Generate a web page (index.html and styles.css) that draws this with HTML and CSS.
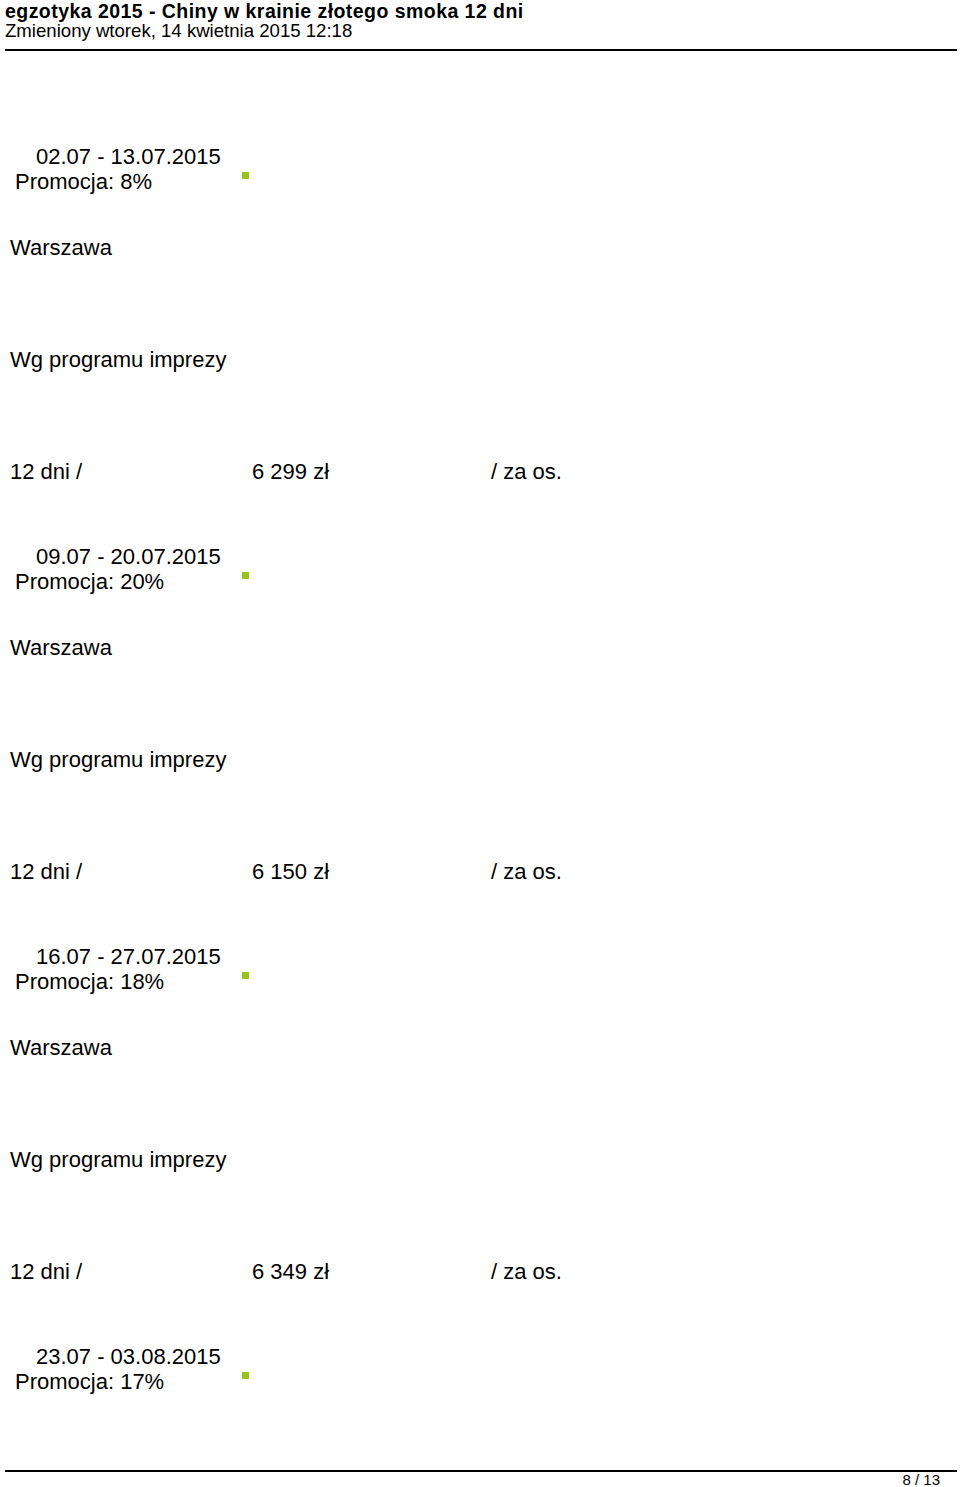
FILE: index.html
```html
<!DOCTYPE html>
<html lang="pl">
<head>
<meta charset="utf-8">
<title>egzotyka 2015 - Chiny w krainie złotego smoka 12 dni</title>
<link rel="stylesheet" href="styles.css">
</head>
<body>
<div class="page">
  <header class="head">
    <div class="title">egzotyka 2015 - Chiny w krainie złotego smoka 12 dni</div>
    <div class="subtitle">Zmieniony wtorek, 14 kwietnia 2015 12:18</div>
    <div class="rule"></div>
  </header>

  <main class="content">
    <section class="term">
      <div class="term-top">
        <div class="term-dates">
          <div class="date">02.07 - 13.07.2015</div>
          <div class="promo">Promocja: 8%</div>
        </div>
        <span class="mark"></span>
      </div>
      <div class="city">Warszawa</div>
      <div class="program">Wg programu imprezy</div>
      <div class="price-row">
        <span class="days">12 dni /</span>
        <span class="price">6 299 zł</span>
        <span class="per">/ za os.</span>
      </div>
    </section>

    <section class="term">
      <div class="term-top">
        <div class="term-dates">
          <div class="date">09.07 - 20.07.2015</div>
          <div class="promo">Promocja: 20%</div>
        </div>
        <span class="mark"></span>
      </div>
      <div class="city">Warszawa</div>
      <div class="program">Wg programu imprezy</div>
      <div class="price-row">
        <span class="days">12 dni /</span>
        <span class="price">6 150 zł</span>
        <span class="per">/ za os.</span>
      </div>
    </section>

    <section class="term">
      <div class="term-top">
        <div class="term-dates">
          <div class="date">16.07 - 27.07.2015</div>
          <div class="promo">Promocja: 18%</div>
        </div>
        <span class="mark"></span>
      </div>
      <div class="city">Warszawa</div>
      <div class="program">Wg programu imprezy</div>
      <div class="price-row">
        <span class="days">12 dni /</span>
        <span class="price">6 349 zł</span>
        <span class="per">/ za os.</span>
      </div>
    </section>

    <section class="term">
      <div class="term-top">
        <div class="term-dates">
          <div class="date">23.07 - 03.08.2015</div>
          <div class="promo">Promocja: 17%</div>
        </div>
        <span class="mark"></span>
      </div>
    </section>
  </main>

  <footer class="foot">
    <div class="rule rule-foot"></div>
    <div class="pagenum">8 / 13</div>
  </footer>
</div>
</body>
</html>
```

FILE: styles.css
```css
html, body {
  margin: 0;
  padding: 0;
  background: #fff;
}

body {
  font-family: "Liberation Sans", Arial, Helvetica, sans-serif;
  color: #000;
}

.page {
  height: 1487px;
  display: flex;
  flex-direction: column;
  overflow: hidden;
}

.head {
  flex: none;
}

.title {
  font-weight: bold;
  font-size: 19.5px;
  letter-spacing: 0.45px;
  line-height: 22.4px;
  padding-left: 5px;
  white-space: nowrap;
}

.subtitle {
  font-size: 18.6px;
  line-height: 18px;
  padding-left: 5px;
  white-space: nowrap;
}

.rule {
  height: 2px;
  background: #000;
  margin: 8.6px 3px 0 5px;
}

.content {
  flex: 1;
  min-height: 0;
  overflow: hidden;
  padding-top: 94px;
  font-size: 22px;
  line-height: 24px;
}

.term {
  height: 400px;
  display: flex;
  flex-direction: column;
}

.term-top {
  display: flex;
  align-items: flex-start;
}

.term-dates {
  width: 242px;
  flex: none;
}

.date {
  padding-left: 36px;
  white-space: nowrap;
}

.promo {
  padding-left: 15px;
  margin-top: 1px;
  white-space: nowrap;
}

.mark {
  width: 7px;
  height: 7px;
  background: #9dc11c;
  margin-top: 27px;
}

.city {
  margin-top: 42px;
  padding-left: 10px;
}

.program {
  margin-top: 88px;
  padding-left: 10px;
}

.price-row {
  margin-top: 88px;
  display: flex;
  padding-left: 10px;
  white-space: nowrap;
}

.days {
  width: 242px;
  flex: none;
}

.price {
  width: 239px;
  flex: none;
}

.foot {
  flex: none;
}

.rule-foot {
  margin-top: 0;
}

.pagenum {
  font-size: 15px;
  line-height: 15px;
  text-align: right;
  padding-right: 20px;
}
```
